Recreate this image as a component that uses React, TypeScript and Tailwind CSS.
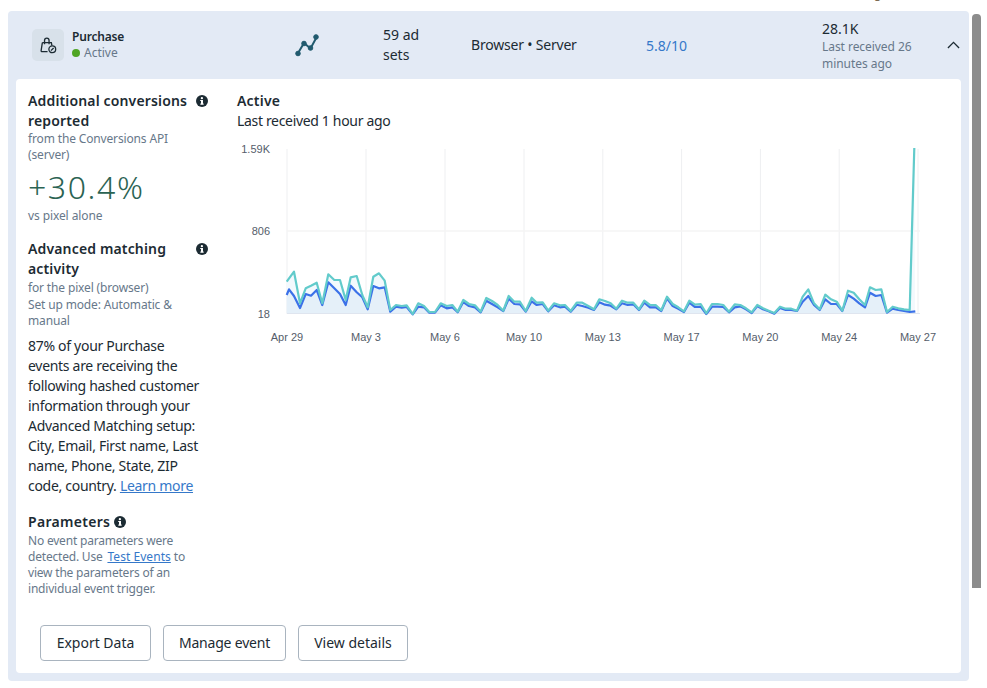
const teal1: number[][] = [[170,185],[192,155],[210,250],[227,205],[243,197],[260,188],[277,250],[295,163],[313,180],[330,180],[347,240],[362,172],[380,168],[397,225],[413,262],[430,170],[447,160],[464,182],[481,270],[498,255],[515,258],[530,256],[548,282],[565,250],[582,258],[598,276],[615,276],[632,250],[650,258],[667,255],[683,275],[700,240],[717,252],[735,256],[752,275],[769,234],[786,243],[803,255],[820,272],[836,228],[853,245],[870,245],[887,273],[905,233],[920,248],[938,247],[955,272],[972,250],[990,256],[1005,255],[1022,273],[1040,248],[1057,248],[1075,258]];
const teal2: number[][] = [[12,268],[28,238],[45,243],[62,250],[79,266],[96,242],[113,248],[130,248],[147,268],[163,242],[180,255],[197,255],[214,271],[231,230],[248,252],[265,262],[282,274],[298,242],[315,254],[332,252],[349,280],[366,252],[383,252],[400,255],[417,275],[434,253],[451,255],[468,265],[485,277],[502,255],[519,265],[536,272],[553,279],[570,260],[587,266],[604,266],[621,272],[638,230],[655,208],[672,250],[689,268],[706,224],[723,238],[740,245],[757,272],[774,212],[791,218],[808,238],[825,255],[840,202],[857,210],[874,208],[891,276],[908,260],[925,265],[942,268],[959,270],[973,-216]];
const blue1: number[][] = [[170,225],[177,208],[192,228],[210,264],[227,222],[243,227],[260,210],[277,255],[295,187],[313,205],[330,222],[347,255],[362,197],[380,217],[397,232],[413,268],[430,198],[447,205],[464,202],[481,275],[498,260],[515,263],[530,261],[548,283],[565,260],[582,262],[598,278],[615,278],[632,256],[650,265],[667,262],[683,277],[700,246],[717,258],[735,262],[752,277],[769,242],[786,252],[803,262],[820,273],[836,236],[853,252],[870,253],[887,275],[905,244],[920,255],[938,252],[955,274],[972,256],[990,262],[1005,260],[1022,275],[1040,254],[1057,258],[1075,263]];
const blue2: number[][] = [[12,270],[28,247],[45,254],[62,257],[79,268],[96,250],[113,255],[130,253],[147,270],[163,248],[180,262],[197,262],[214,273],[231,235],[248,258],[265,266],[282,276],[298,248],[315,261],[332,260],[349,282],[366,260],[383,260],[400,261],[417,277],[434,262],[451,259],[468,268],[485,279],[502,258],[519,268],[536,274],[553,281],[570,264],[587,270],[604,270],[621,273],[638,245],[655,228],[672,255],[689,270],[706,238],[723,252],[740,252],[757,273],[774,225],[791,236],[808,250],[825,262],[840,218],[857,228],[874,225],[891,278],[908,266],[925,270],[942,273],[959,276],[976,274]];

// Zoomed-in readings -> chart coordinates (chart svg origin is at page x=230, y=140)
const conv = (a: number[][], base: number) =>
  a.map(([x, y]) => [(base + x / 3 - 230).toFixed(1), (220 + y / 3 - 140).toFixed(1)].join(",")).join(" ");
const tealPts = conv(teal1, 230) + " " + conv(teal2, 590);
const bluePts = conv(blue1, 230) + " " + conv(blue2, 590);

const xLabels: [string, number][] = [["Apr 29", 286.5], ["May 3", 365.5], ["May 6", 444.5], ["May 10", 523.5], ["May 13", 602.3], ["May 17", 681.1], ["May 20", 759.9], ["May 24", 838.7], ["May 27", 917.5]];

function Info({ className }: { className: string }) {
  return (
    <svg viewBox="0 0 12 12" className={className}>
      <circle cx="6" cy="6" r="6" fill="#1c2b33" />
      <rect x="5" y="5" width="2" height="4.4" fill="#fff" />
      <rect x="4.2" y="5" width="1.4" height="1" fill="#fff" />
      <rect x="4.2" y="8.6" width="3.6" height="1" fill="#fff" />
      <circle cx="5.9" cy="3.2" r="1.15" fill="#fff" />
    </svg>
  );
}

function Chart() {
  return (
    <svg width="720" height="215" viewBox="0 0 720 215" className="block mt-[9px] -ml-[7px]">
      {xLabels.map(([, x]) => (
        <line key={x} x1={x - 230 + 0.5} x2={x - 230 + 0.5} y1="9" y2="174" stroke="#eeeff1" strokeWidth="1" />
      ))}
      <line x1="57" x2="690" y1="91" y2="91" stroke="#f4f4f5" strokeWidth="1.5" />
      <polygon points={`56.7,173 ${tealPts} 685,173`} fill="#f3f9fd" />
      <polygon points={`56.7,173 ${bluePts} 685.3,173`} fill="#e5f0f9" />
      <line x1="57" x2="690" y1="173.5" y2="173.5" stroke="#dfe5ef" strokeWidth="1" />
      <polyline points={bluePts} fill="none" stroke="#3b71e8" strokeWidth="2.2" strokeLinejoin="round" />
      <polyline points={tealPts} fill="none" stroke="#62cbcb" strokeWidth="2.2" strokeLinejoin="round" />
      <g fontFamily="'Liberation Sans', Arial, sans-serif" fontSize="11" fill="#555d6a">
        <text x="40" y="13" textAnchor="end">1.59K</text>
        <text x="40" y="95" textAnchor="end">806</text>
        <text x="40" y="178" textAnchor="end">18</text>
        {xLabels.map(([t, x]) => (
          <text key={t} x={x - 229.5} y="201" textAnchor="middle">{t}</text>
        ))}
      </g>
    </svg>
  );
}

export default function App() {
  return (
    <div className="relative h-[688px] w-[987px] overflow-hidden bg-white font-['Noto_Sans',sans-serif] text-[#1c2b33]">
      <div className="h-[11px] overflow-hidden pl-[874px]">
        <div className="-mt-[14px] text-[12px] leading-[16px] text-[#7d6a50]">g</div>
      </div>
      <div className="ml-2 h-[670px] w-[961px] rounded-[4px] bg-[#e3eaf5] px-2 pb-2">
        <div className="flex h-[68px] items-center text-[14px]">
          <div className="ml-4 flex h-8 w-8 items-center justify-center rounded-[5px] bg-[#d8e1ea]">
            <svg viewBox="0 0 18 18" className="h-[17px] w-[17px]" fill="none" stroke="#1c2b33" strokeWidth="1.4">
              <path d="M2.5 6h9.5l.6 3M8 15.5H2.2c-.7 0-1.1-.5-1-1.2L2.5 6" />
              <path d="M4.8 7.8V3.6C4.8 2.2 5.9 1.2 7.2 1.2s2.4 1 2.4 2.4v4.2" />
              <circle cx="13" cy="13" r="3.6" />
              <path d="M11.6 14.4l2.8-2.8" />
            </svg>
          </div>
          <div className="ml-2 w-[100px]">
            <div className="text-[12px] font-semibold leading-[16px] tracking-[-0.2px]">Purchase</div>
            <div className="flex items-center text-[12px] leading-[16px] text-[#67788a]">
              <span className="mr-1 h-2 w-2 rounded-full bg-[#4fa524]" />
              Active
            </div>
          </div>
          <svg viewBox="0 0 24 24" className="ml-[123px] h-6 w-6" fill="#215a6e" stroke="#215a6e">
            <polyline points="2.5,21 9,10 15.5,15.5 22,3.5" fill="none" strokeWidth="2" />
            <circle cx="3" cy="20.5" r="2.3" />
            <circle cx="9" cy="10.5" r="2.3" />
            <circle cx="15.5" cy="15" r="2.3" />
            <circle cx="21" cy="4" r="2.3" />
          </svg>
          <div className="ml-[64px] w-[88px] leading-[20px]">59 ad<br />sets</div>
          <div className="-mt-[2px] w-[175px] tracking-[-0.2px]">Browser • Server</div>
          <div className="w-[176px] text-[#3578c9]">5.8/10</div>
          <div className="mt-[2px] w-[125px]">
            <div className="leading-[18px]">28.1K</div>
            <div className="mt-[1px] text-[12px] leading-[16.5px] tracking-[-0.05px] text-[#67788a]">Last received 26<br />minutes ago</div>
          </div>
          <svg viewBox="0 0 14 8" className="h-2 w-[13px]" fill="none" stroke="#1c2b33" strokeWidth="1.4">
            <path d="M1 7.3 7 1.2l6 6.1" />
          </svg>
        </div>
        <div className="h-[594px] rounded-[4px] bg-white">
          <div className="flex h-[546px]">
            <div className="ml-3 w-[182px] pt-[12px] text-[14px]">
              <div className="flex items-start">
                <div className="w-[168px] font-semibold leading-[20px] tracking-[0.15px]">Additional conversions reported</div>
                <Info className="mt-[4px] h-3 w-3 shrink-0" />
              </div>
              <div className="text-[12px] leading-[16px] tracking-[-0.15px] text-[#67788a]">from the Conversions API (server)</div>
              <div className="mt-[5px] text-[32px] font-light leading-[38px] tracking-[1.6px] text-[#2b6353]">+30.4%</div>
              <div className="mt-[2px] text-[12px] leading-[16px] tracking-[-0.1px] text-[#67788a]">vs pixel alone</div>
              <div className="mt-[15px] flex items-start">
                <div className="w-[168px] font-semibold leading-[20px] tracking-[0.15px]">Advanced matching activity</div>
                <Info className="mt-[4px] h-3 w-3 shrink-0" />
              </div>
              <div className="mt-[1px] text-[12px] leading-[16.5px] tracking-[-0.15px] text-[#67788a]">for the pixel (browser)<br />Set up mode: Automatic &amp; manual</div>
              <div className="mt-[6px] w-[175px] leading-[20px] tracking-[-0.3px]">87% of your Purchase events are receiving the following hashed customer information through your Advanced Matching setup: City, Email, First name, Last name, Phone, State, ZIP code, country. <span className="text-[#3578c9] underline">Learn more</span></div>
              <div className="mt-[16px] flex items-center font-semibold leading-[20px] tracking-[0.3px]">
                Parameters
                <Info className="ml-1 h-3 w-3" />
              </div>
              <div className="mt-[1px] w-[165px] text-[12px] leading-[16.3px] tracking-[-0.2px] text-[#67788a]">No event parameters were detected. Use <span className="ml-[2px] tracking-[0.05px] text-[#3578c9] underline">Test Events</span> to view the parameters of an individual event trigger.</div>
            </div>
            <div className="ml-[27px] pt-[12px] text-[14px]">
              <div className="font-semibold leading-[20px] tracking-[0.2px]">Active</div>
              <div className="leading-[20px] tracking-[-0.33px]">Last received 1 hour ago</div>
              <Chart />
            </div>
          </div>
          <div className="ml-6 flex gap-3 text-[14px]">
            <button className="h-9 w-[111px] rounded-[4px] border border-[#a9b4bf] bg-white pb-[1px]">Export Data</button>
            <button className="h-9 w-[123px] rounded-[4px] border border-[#a9b4bf] bg-white pb-[1px] tracking-[-0.2px]">Manage event</button>
            <button className="h-9 w-[110px] rounded-[4px] border border-[#a9b4bf] bg-white pb-[1px]">View details</button>
          </div>
        </div>
      </div>
      <div className="absolute left-[972px] top-[14px] h-[574px] w-[9px] rounded-t-[4px] bg-[#8c8c8c]" />
    </div>
  );
}
